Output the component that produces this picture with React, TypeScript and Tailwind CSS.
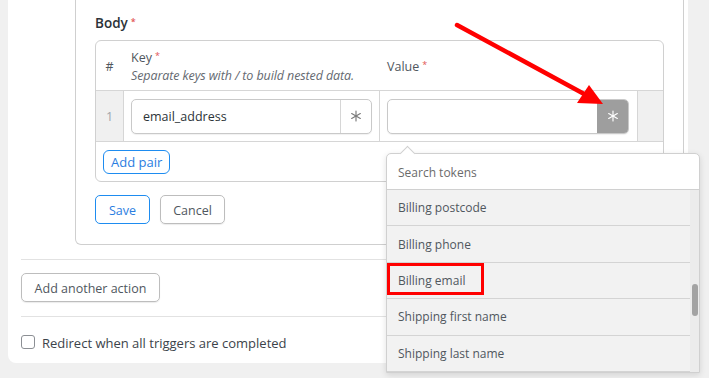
import * as React from 'react';
import { Asterisk } from 'lucide-react';

const font = { fontFamily: '"Open Sans", "Noto Sans", sans-serif' };

const tokens = ['Billing postcode', 'Billing phone', 'Billing email', 'Shipping first name', 'Shipping last name'];

const Req = () => <sup className="ml-[3px] text-[9px] text-[#e25555] relative top-[-3px]">*</sup>;

const TokenInput = ({ value, active }: { value?: string; active?: boolean }) => (
  <div className="flex h-[35px] w-full rounded-[5px] border border-[#c9c9c9] bg-white shadow-[0_1px_1px_rgba(0,0,0,0.06)]">
    <div className="flex flex-1 items-center pl-[11px] pt-[3px] text-[12.5px] text-[#2c3338]">{value}</div>
    <div
      className={
        active
          ? 'flex w-[31px] items-center justify-center rounded-r-[4px] bg-[#9e9e9e] text-white'
          : 'flex w-[31px] items-center justify-center border-l border-[#d6d6d6] text-[#7a7a7a]'
      }
    >
      <Asterisk size={20} strokeWidth={1.4} />
    </div>
  </div>
);

const TokenDropdown = () => (
  <div className="absolute left-[386px] top-[153px] w-[314px] rounded-t-[5px] border border-[#d0d0d0] bg-white shadow-[0_2px_6px_rgba(0,0,0,0.12)]">
    <div className="absolute left-[15px] top-[-6px] h-[11px] w-[11px] rotate-45 border-l border-t border-[#d0d0d0] bg-white" />
    <div className="relative flex h-[36px] items-center border-b border-[#d0d0d0] pl-[11px] pt-[2px] text-[12px] text-[#6b6b6b]">
      Search tokens
    </div>
    <div className="flex">
      <div className="flex-1 bg-[#f2f2f2]">
        {tokens.map((t) => (
          <div key={t} className="flex h-[36.4px] items-center border-b border-[#d4d4d4] pl-[11px] pt-[1px] text-[12px] text-[#50575e]">
            {t}
          </div>
        ))}
      </div>
      <div className="w-[9px] bg-[#ececec] pt-[94px]">
        <div className="mx-auto h-[32px] w-[6px] rounded-full bg-[#a3a3a3]" />
      </div>
    </div>
  </div>
);

const Annotations = () => (
  <>
    <svg className="absolute left-0 top-0" width="709" height="378">
      <line x1="457" y1="25" x2="586" y2="95" stroke="#ff0000" strokeWidth="4.5" strokeLinecap="round" />
      <polygon points="603,104 577,103 589,85" fill="#ff0000" />
    </svg>
    <div className="absolute left-[387px] top-[263px] h-[32px] w-[97px] border-[3px] border-[#ff0000]" />
  </>
);

export default function App() {
  return (
    <div className="relative h-[378px] w-[709px] overflow-hidden bg-[#f0f0f0]" style={font}>
      <div className="ml-[8px] h-[363px] w-[680px] rounded-b-[8px] bg-white pl-[13px] pr-[4px]">
        <div className="ml-[54px] rounded-b-[6px] border-x border-b border-[#cfcfcf] pl-[19px] pr-[19px] pt-[13px] pb-[20px]">
          <div className="h-[19px] text-[13.5px] font-semibold leading-[20px] text-[#2c3338]">
            Body
            <Req />
          </div>
          <div className="mt-[8px] rounded-[6px] border border-[#d0d0d0]">
            <div className="flex h-[50px] items-center border-b border-[#d6d6d6] pt-[3px] text-[12.5px] text-[#50575e]">
              <div className="w-[27px] text-center">#</div>
              <div className="w-[256px] pl-[8px] leading-[18px]">
                <div>
                  Key
                  <Req />
                </div>
                <div className="italic tracking-[-0.1px] text-[#646970]">Separate keys with / to build nested data.</div>
              </div>
              <div className="pl-[8px]">
                Value
                <Req />
              </div>
            </div>
            <div className="flex h-[51px] border-b border-[#d6d6d6]">
              <div className="flex w-[27px] items-center justify-center bg-[#f0f0f0] pt-[3px] text-[12.5px] text-[#a0a5aa]">1</div>
              <div className="flex w-[256px] items-center border-l border-[#d6d6d6] pl-[7px] pr-[7px]">
                <TokenInput value="email_address" />
              </div>
              <div className="flex w-[258px] items-center border-l border-[#d6d6d6] pl-[7px] pr-[8px]">
                <TokenInput active />
              </div>
              <div className="flex-1 border-l border-[#d6d6d6] bg-[#f0f0f0]" />
            </div>
            <div className="h-[39px] pl-[7px] pt-[7px]">
              <button className="h-[24px] rounded-[6px] border border-[#1e8cf0] px-[7px] pt-[2px] text-[13px] text-[#2a7de1]">
                Add pair
              </button>
            </div>
          </div>
          <div className="mt-[13px] flex gap-[10px]">
            <button className="h-[29px] w-[55px] rounded-[5px] border border-[#1e8cf0] pt-[4px] text-[12.5px] text-[#2a7de1]">Save</button>
            <button className="h-[29px] w-[65px] rounded-[5px] border border-[#bdbdbd] pt-[4px] text-[12.5px] text-[#50575e] shadow-[0_1px_1px_rgba(0,0,0,0.08)]">
              Cancel
            </button>
          </div>
        </div>
        <div className="mt-[14px] mr-[8px] border-t border-[#e2e2e2]" />
        <div className="pt-[13px] pb-[14px]">
          <button className="h-[29px] w-[139px] rounded-[5px] border border-[#bdbdbd] pt-[4px] text-[12.5px] text-[#50575e] shadow-[0_1px_1px_rgba(0,0,0,0.08)]">
            Add another action
          </button>
        </div>
        <div className="mr-[8px] border-t border-[#e2e2e2]" />
        <div className="mt-[16px] flex items-center gap-[7px]">
          <div className="h-[14px] w-[14px] rounded-[3px] border border-[#8c8f94] bg-white" />
          <span className="pt-[2px] text-[13px] leading-[16px] text-[#3c434a]">Redirect when all triggers are completed</span>
        </div>
      </div>
      <TokenDropdown />
      <Annotations />
    </div>
  );
}
